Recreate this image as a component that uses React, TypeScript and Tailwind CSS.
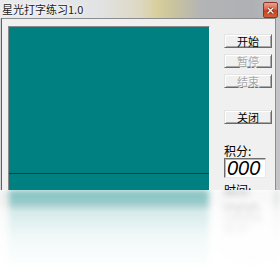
import React from "react";

const CJK = "font-['Noto_Sans_CJK_SC','Noto_Sans',sans-serif]";

function Btn({ label, disabled = false, mt }: { label: string; disabled?: boolean; mt: string }) {
  return (
    <div
      className={`${mt} w-[48px] h-[14px] shrink-0 flex items-center justify-center bg-[#f0f0f0] border border-t-[#e4e4e4] border-l-[#e4e4e4] border-r-[#6a6a6a] border-b-[#6a6a6a] shadow-[inset_1px_1px_0_#ffffff,inset_-1px_-1px_0_#a8a8a8] text-[11px] leading-[11px] ${CJK} ${
        disabled ? "text-[#a8a8a8] [text-shadow:1px_1px_0_#ffffff]" : "text-black"
      }`}
    >
      {label}
    </div>
  );
}

function Win() {
  return (
    <div className="w-[280px] h-[190px] flex flex-col bg-[linear-gradient(to_right,#d4d6d9,#c2c4c8)]">
      <div className="h-[18px] shrink-0 flex items-start bg-[linear-gradient(to_right,#eaebed_0%,#e2e3e5_35%,#dcd8c2_50%,#d8cf9c_56%,#c9c39e_62%,#b3b4b6_72%,#aeb0b3_90%,#b9bbbe_100%)]">
        <span
          className={`ml-[2px] mt-[2px] text-[11px] leading-[14px] text-[#222] [text-shadow:0_0_5px_#ffffff,0_0_3px_#ffffff] ${CJK}`}
        >
          星光打字练习1.0
        </span>
        <div className="ml-auto mr-[2px] mt-[2px] w-[15px] h-[16px] flex items-center justify-center rounded-[2px] border border-[#8a3426] bg-[linear-gradient(#eca390,#d9634a_45%,#c4401f_55%,#d0603c)]">
          <svg width="7" height="7" viewBox="0 0 7 7">
            <path d="M1 1 L6 6 M6 1 L1 6" stroke="#5a1a10" strokeWidth="2.6" strokeLinecap="square" />
            <path d="M1 1 L6 6 M6 1 L1 6" stroke="#ffffff" strokeWidth="1.4" strokeLinecap="square" />
          </svg>
        </div>
      </div>
      <div className="flex-1 flex ml-[1px] mr-[4px] border-l border-l-[#5f5f5f] border-t border-t-[#8d8d8d] border-r border-r-[#8d8d8d] bg-[#f0f0f0] pl-[6px] pt-[7px]">
        <div className="w-[202px] h-[240px] shrink-0 flex flex-col border border-t-[#8a8a8a] border-l-[#8a8a8a] border-r-white border-b-white bg-[#008080]">
          <div className="h-[146px] shrink-0" />
          <div className="h-[1px] bg-[#1e3838]" />
        </div>
        <div className="ml-[14px] w-[48px] flex flex-col">
          <Btn label="开始" mt="mt-[8px]" />
          <Btn label="暂停" disabled mt="mt-[6px]" />
          <Btn label="结束" disabled mt="mt-[6px]" />
          <Btn label="关闭" mt="mt-[22px]" />
          <div className={`mt-[20px] text-[12px] leading-[14px] text-black ${CJK}`}>积分:</div>
          <div className="mt-[0px] w-[42px] h-[20px] shrink-0 flex items-center border border-t-[#6e6e6e] border-l-[#6e6e6e] border-r-[#e8e8e8] border-b-[#e8e8e8] bg-white shadow-[inset_1px_1px_0_#b8b8b8]">
            <span className="ml-[2px] italic text-[20px] leading-[18px] text-black font-['Liberation_Sans',Arial,sans-serif]">
              000
            </span>
          </div>
          <div className={`mt-[5px] text-[12px] leading-[14px] text-black ${CJK}`}>时间:</div>
        </div>
      </div>
    </div>
  );
}

export default function App() {
  return (
    <div className="w-[280px] h-[270px] overflow-hidden bg-white flex flex-col">
      <div className="h-[190px] shrink-0 overflow-hidden">
        <Win />
      </div>
      <div className="h-[80px] shrink-0 overflow-hidden bg-white">
        <div className="h-[190px] overflow-hidden -scale-y-100 blur-[3px] [mask-image:linear-gradient(to_top,rgba(0,0,0,0.5)_0px,rgba(0,0,0,0.4)_12px,rgba(0,0,0,0.16)_22px,rgba(0,0,0,0.06)_45px,transparent_80px)]">
          <Win />
        </div>
      </div>
    </div>
  );
}
